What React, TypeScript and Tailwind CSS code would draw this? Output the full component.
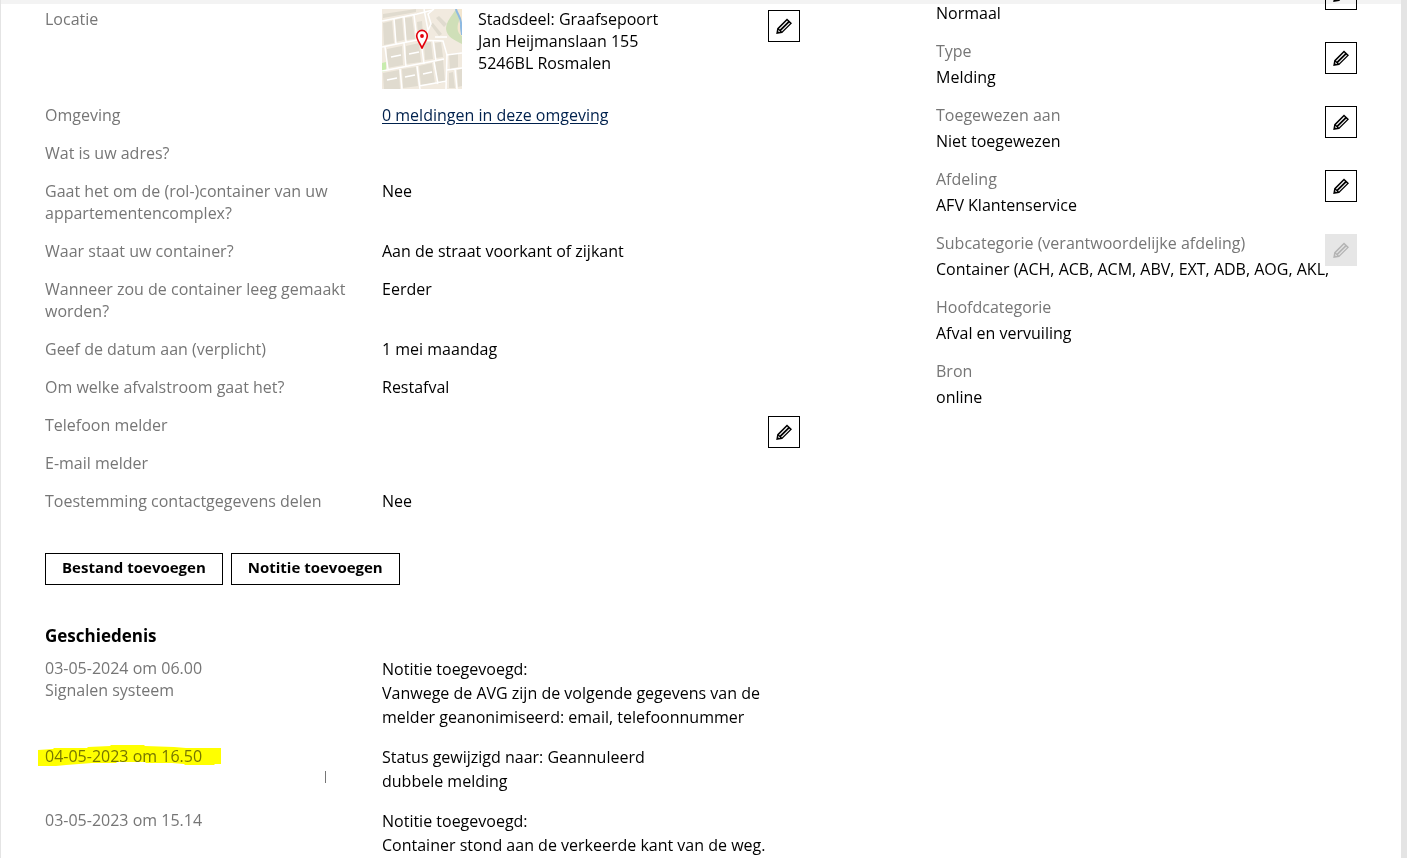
import type { ReactNode } from "react";

function PencilIcon() {
  return (
    <svg viewBox="0 0 16 16" className="h-4 w-4" aria-hidden="true">
      <path
        fillRule="evenodd"
        fill="currentColor"
        d="M0.2 16 L1.2 10.2 L11 0.6 L16 5.2 L6.2 15 Z M3 10.7 L3.8 11.5 L11.9 3.4 L11.1 2.6 Z M5.1 12.8 L5.9 13.6 L14 5.5 L13.2 4.7 Z M2.4 12 L2.1 13.2 L3 14 L4.2 13.7 Z"
      />
    </svg>
  );
}

function EditButton({ label, disabled = false }: { label: string; disabled?: boolean }) {
  return (
    <button
      type="button"
      aria-label={label}
      disabled={disabled}
      className="flex h-8 w-8 shrink-0 items-center justify-center border border-black text-black disabled:border-[#e6e6e6] disabled:bg-[#e6e6e6] disabled:text-[#b4b4b4]"
    >
      <PencilIcon />
    </button>
  );
}

function LocationMap() {
  return (
    <svg viewBox="0 0 80 80" className="h-20 w-20 shrink-0" role="img" aria-label="Kaart van de locatie">
      <rect width="80" height="80" fill="#f1eadf" />
      <path d="M80 0 H74 C70 7 64 12 64 20 C65 28 72 31 80 35 Z" fill="#cfdfb8" />
      <path d="M80 27 C76 25 74 19 77 12 C80 6 73 6 74 0 H80 Z" fill="#f3e6cf" />
      <path d="M74 0 C75 6 80 8 79 17 C79 21 80 24 80 26" fill="none" stroke="#8db9e2" strokeWidth="2" />
      <path d="M0 54 L4 53 V62 L0 63 Z" fill="#c8ecae" />
      <g fill="#e0dbcf">
        <path d="M1 14 L10 12 L12 34 L2 36 Z M13 11 L20 9 L22 31 L14 33 Z M23 9 L30 8 L33 30 L24 31 Z M1 5 L34 0 V3 L1 9 Z" />
        <path d="M5 40 L20 37 L21 56 L5 59 Z M24 37 L37 34 L39 53 L24 55 Z M42 34 L49 33 L51 50 L43 51 Z M53 34 L59 33 L61 48 L54 49 Z" />
        <path d="M1 64 L17 61 L18 80 H2 Z M20 60 L34 58 L36 77 L21 79 Z M37 57 L50 54 L53 74 L39 76 Z M53 53 L61 51 L63 73 L56 75 Z" />
        <path d="M67 46 L76 44 V58 L68 60 Z M67 64 L71 63 L73 79 H67 Z M75 61 L80 60 V77 L76 78 Z" />
        <path d="M48 15 L51 14 L60 25 L57 27 Z M54 9 L57 7 L65 15 L62 18 Z M35 13 L40 12 L41 25 L36 26 Z" />
      </g>
      <g fill="none" stroke="#fff" strokeWidth="1.5">
        <path d="M0 12 L35 5 L51 1 M0 38 L35 31 L61 32 L65 46 L80 44 M12 10 L14 35 M22 8 L24 33 M32 6 L35 31" />
        <path d="M42 0 L46 21 M52 0 L46 5 L49 15 L43 28 M3 38 L6 60 M22 34 L24 58 M39 32 L42 55 M51 31 L54 52" />
        <path d="M0 62 L21 58 L62 50 M18 60 L20 80 M35 57 L38 80 M52 53 L56 75 M65 45 L64 80 M37 77 L65 72" />
        <path d="M9 48 L19 46 M27 45 L37 43 M5 71 L15 69 M23 68 L33 66 M41 65 L50 63 M65 61 L80 59 M73 60 L75 80 M53 28 H65" />
      </g>
      <path
        d="M40 39.5 C39 35.5 34.7 31 34.7 26.7 A5.3 5.3 0 0 1 45.3 26.7 C45.3 31 41 35.5 40 39.5 Z"
        fill="#fff"
        stroke="#e3000b"
        strokeWidth="1.6"
      />
      <circle cx="40" cy="27" r="1.9" fill="#e3000b" />
    </svg>
  );
}

function DetailRow({ label, children, edit }: { label: string; children?: ReactNode; edit?: string }) {
  return (
    <div className="grid grid-cols-[305px_minmax(0,1fr)_32px] items-start gap-x-8">
      <dt className="text-[#767676]">{label}</dt>
      <dd>{children}</dd>
      {edit && (
        <dd className="mt-0.5 -mb-4">
          <EditButton label={edit} />
        </dd>
      )}
    </div>
  );
}

type MetaRowProps = { label?: string; value: string; edit?: string; disabled?: boolean };

function MetaRow({ label, value, edit, disabled }: MetaRowProps) {
  return (
    <div className="flex items-start justify-between">
      <div className="flex min-w-0 flex-1 flex-col gap-1">
        <dt className="min-h-[22px] text-[#767676]">{label}</dt>
        <dd className="whitespace-nowrap">{value}</dd>
      </div>
      {edit && (
        <dd className="mt-0.5">
          <EditButton label={edit} disabled={disabled} />
        </dd>
      )}
    </div>
  );
}

function HistoryEntry({ date, author, lines, marked }: { date: string; author?: string; lines: string[]; marked?: boolean }) {
  return (
    <li className="relative grid grid-cols-[305px_minmax(0,1fr)] gap-x-8">
      <div className="text-[#767676]">
        <span className="relative">
          {date}
          {marked && (
            <svg
              viewBox="0 0 184 22"
              preserveAspectRatio="none"
              className="pointer-events-none absolute top-0 -left-2 h-[22px] w-[184px] mix-blend-multiply"
              aria-hidden="true"
            >
              <path
                d="M1 5 L16 4 L17 3 L50 3 L51 2 L73 1 L74 0 L107 0 L108 1 L137 2 L149 3 L184 3 V19 H178 L177 20 H148 L147 19 L135 18 H109 L108 17 H80 L79 18 L55 18 L29 20 L19 21 H1 Z"
                fill="#ff0"
              />
            </svg>
          )}
        </span>
        {author && <div>{author}</div>}
        {marked && <span className="absolute top-[26px] left-[280px] h-3 w-px bg-[#767676]" />}
      </div>
      <div className="leading-6">
        {lines.map((line) => (
          <p key={line} className="whitespace-nowrap">{line}</p>
        ))}
      </div>
    </li>
  );
}

export default function App() {
  return (
    <div className="h-screen overflow-hidden border-r-6 border-l border-r-[#e4e4e4] border-l-[#e4e4e4] bg-white font-['Open_Sans',sans-serif] text-base leading-[22px] text-black">
      <div className="h-1 bg-[#f3f3f3]" />
      <main className="grid grid-cols-[minmax(0,755fr)_minmax(0,421fr)] items-start gap-x-[136px] px-11">
        <section className="pt-1">
          <dl className="flex flex-col gap-4">
            <DetailRow label="Locatie" edit="Locatie wijzigen">
              <div className="flex gap-4">
                <div className="mt-px -mb-px">
                  <LocationMap />
                </div>
                <address className="not-italic">
                  Stadsdeel: Graafsepoort
                  <br />
                  Jan Heijmanslaan 155
                  <br />
                  5246BL Rosmalen
                </address>
              </div>
            </DetailRow>
            <DetailRow label="Omgeving">
              <a href="#omgeving" className="text-[#00214d] underline underline-offset-2">0 meldingen in deze omgeving</a>
            </DetailRow>
            <DetailRow label="Wat is uw adres?" />
            <DetailRow label="Gaat het om de (rol-)container van uw appartementencomplex?">Nee</DetailRow>
            <DetailRow label="Waar staat uw container?">Aan de straat voorkant of zijkant</DetailRow>
            <DetailRow label="Wanneer zou de container leeg gemaakt worden?">Eerder</DetailRow>
            <DetailRow label="Geef de datum aan (verplicht)">1 mei maandag</DetailRow>
            <DetailRow label="Om welke afvalstroom gaat het?">Restafval</DetailRow>
            <DetailRow label="Telefoon melder" edit="Telefoon melder wijzigen" />
            <DetailRow label="E-mail melder" />
            <DetailRow label="Toestemming contactgegevens delen">Nee</DetailRow>
          </dl>

          <div className="mt-[41px] flex gap-2 text-[15px] leading-5 font-bold">
            <button type="button" className="h-8 border border-black px-4 pb-1">Bestand toevoegen</button>
            <button type="button" className="h-8 border border-black px-4 pb-1">Notitie toevoegen</button>
          </div>

          <h2 className="mt-10 text-[17px] font-bold">Geschiedenis</h2>
          <ol className="mt-2.5 flex flex-col gap-4">
            <HistoryEntry
              date="03-05-2024 om 06.00"
              author="Signalen systeem"
              lines={["Notitie toegevoegd:", "Vanwege de AVG zijn de volgende gegevens van de", "melder geanonimiseerd: email, telefoonnummer"]}
            />
            <HistoryEntry date="04-05-2023 om 16.50" lines={["Status gewijzigd naar: Geannuleerd", "dubbele melding"]} marked />
            <HistoryEntry date="03-05-2023 om 15.14" lines={["Notitie toegevoegd:", "Container stond aan de verkeerde kant van de weg."]} />
          </ol>
        </section>

        <dl className="-mt-7 flex flex-col gap-4">
          <MetaRow value="Normaal" edit="Wijzigen" />
          <MetaRow label="Type" value="Melding" edit="Type wijzigen" />
          <MetaRow label="Toegewezen aan" value="Niet toegewezen" edit="Toegewezen aan wijzigen" />
          <MetaRow label="Afdeling" value="AFV Klantenservice" edit="Afdeling wijzigen" />
          <MetaRow
            label="Subcategorie (verantwoordelijke afdeling)"
            value="Container (ACH, ACB, ACM, ABV, EXT, ADB, AOG, AKL,"
            edit="Subcategorie wijzigen"
            disabled
          />
          <MetaRow label="Hoofdcategorie" value="Afval en vervuiling" />
          <MetaRow label="Bron" value="online" />
        </dl>
      </main>
    </div>
  );
}
